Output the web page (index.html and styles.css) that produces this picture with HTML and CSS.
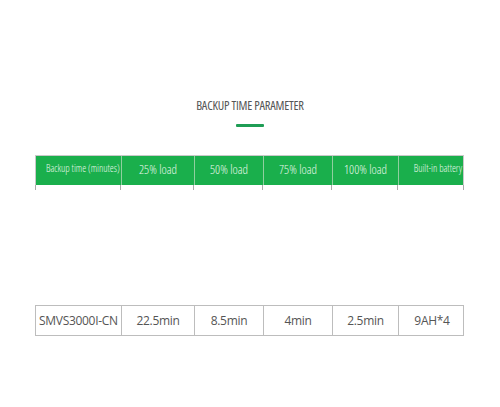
FILE: index.html
```html
<!DOCTYPE html>
<html>
<head>
<meta charset="utf-8">
<link rel="stylesheet" href="styles.css">
</head>
<body>
<div class="page">
  <div class="heading">
    <h2 class="title">BACKUP TIME PARAMETER</h2>
    <div class="bar"></div>
  </div>
  <div class="table">
    <div class="row head">
      <div class="cell small">Backup time (minutes)</div>
      <div class="cell">25% load</div>
      <div class="cell">50% load</div>
      <div class="cell">75% load</div>
      <div class="cell">100% load</div>
      <div class="cell small">Built-in battery</div>
    </div>
    <div class="row ticks">
      <div class="cell"></div><div class="cell"></div><div class="cell"></div>
      <div class="cell"></div><div class="cell"></div><div class="cell"></div>
    </div>
    <div class="gap"></div>
    <div class="row data">
      <div class="cell">SMVS3000I-CN</div>
      <div class="cell">22.5min</div>
      <div class="cell">8.5min</div>
      <div class="cell">4min</div>
      <div class="cell">2.5min</div>
      <div class="cell">9AH*4</div>
    </div>
  </div>
</div>
</body>
</html>
```
FILE: styles.css
```css
* { box-sizing: border-box; }
html, body { margin: 0; padding: 0; background: #fff; }
.page { width: 500px; height: 407px; padding-top: 99px; font-family: "Open Sans", "Noto Sans", sans-serif; }
.heading { display: flex; flex-direction: column; align-items: center; }
.title { margin: 0; font-size: 12.5px; font-weight: 400; color: #555; line-height: 14px; letter-spacing: -0.2px; font-stretch: condensed; white-space: nowrap; }
.bar { width: 28px; height: 3px; background: #1f9d55; margin-top: 11px; border-radius: 1px; }
.table { margin: 28px 0 0 35px; width: 429px; }
.row { display: grid; grid-template-columns: 85px 73px 69px 69px 66px 67px; }
.cell { white-space: nowrap; }
.head { height: 30px; background: #1aaf4c; border: 1px solid #c9c9c9; border-bottom: 0; }
.head .cell { display: flex; align-items: center; justify-content: center; padding-bottom: 3px; color: #e6f7ea; font-size: 12.5px; font-weight: 300; font-stretch: condensed; border-left: 1px solid #8fcf9f; }
.head .cell:first-child { border-left: 0; justify-content: flex-start; padding-left: 10px; }
.head .small { font-size: 10px; padding-bottom: 6px; }
.head .cell:last-child { justify-content: flex-end; padding-right: 3px; }
.ticks { height: 5px; }
.ticks .cell { border-left: 1px solid #aaa; }
.ticks .cell:last-child { border-right: 1px solid #aaa; }
.gap { height: 115px; }
.data { height: 31px; border: 1px solid #bdbdbd; }
.data .cell { display: flex; align-items: center; justify-content: center; color: #555; font-size: 12px; border-left: 1px solid #bdbdbd; letter-spacing: -0.3px; }
.data .cell:first-child { border-left: 0; justify-content: flex-start; padding-left: 3px; }
```
